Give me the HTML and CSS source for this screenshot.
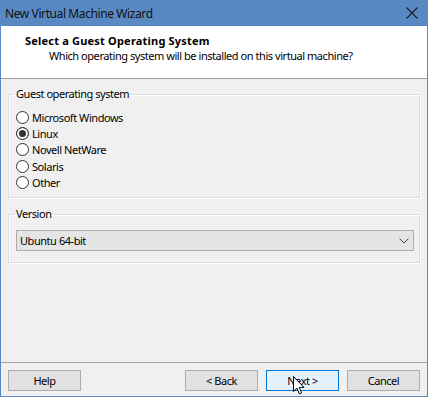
FILE: index.html
```html
<!DOCTYPE html>
<html lang="en">
<head>
    <meta charset="UTF-8">
    <meta name="viewport" content="width=device-width, initial-scale=1.0">
    <title>New Virtual Machine Wizard</title>
    <link rel="stylesheet" href="styles.css">
</head>
<body>
    <div class="window">
        <div class="titlebar">
            <span class="title">New Virtual Machine Wizard</span>
            <svg class="close" width="12" height="12" viewBox="0 0 12 12">
                <path d="M0.5 0.5 L11.5 11.5 M11.5 0.5 L0.5 11.5" stroke="#1a1a1a" stroke-width="1.1" fill="none"/>
            </svg>
        </div>

        <div class="header">
            <h1>Select a Guest Operating System</h1>
            <p>Which operating system will be installed on this virtual machine?</p>
        </div>

        <div class="content">
            <fieldset class="group">
                <legend>Guest operating system</legend>
                <label class="option"><input type="radio" name="os"> Microsoft Windows</label>
                <label class="option"><input type="radio" name="os" checked> Linux</label>
                <label class="option"><input type="radio" name="os"> Novell NetWare</label>
                <label class="option"><input type="radio" name="os"> Solaris</label>
                <label class="option"><input type="radio" name="os"> Other</label>
            </fieldset>

            <fieldset class="group group-version">
                <legend>Version</legend>
                <div class="combo">
                    <span>Ubuntu 64-bit</span>
                    <svg width="10" height="6" viewBox="0 0 10 6">
                        <path d="M0.5 0.5 L5 5 L9.5 0.5" stroke="#444" stroke-width="1" fill="none"/>
                    </svg>
                </div>
            </fieldset>
        </div>

        <div class="footer">
            <button type="button">Help</button>
            <span class="spacer"></span>
            <button type="button">&lt; Back</button>
            <button type="button" class="btn-default">Next &gt;</button>
            <button type="button">Cancel</button>

            <svg class="cursor" width="12" height="19" viewBox="0 0 12 19">
                <path d="M0.5 0.5 L0.5 15.5 L4 12.2 L6.4 17.8 L8.6 16.9 L6.3 11.4 L11 11.4 Z" fill="#fff" stroke="#000" stroke-width="1"/>
            </svg>
        </div>
    </div>
</body>
</html>
```

FILE: styles.css
```css
body {
    margin: 0;
    font-family: "Noto Sans", sans-serif;
    font-size: 11px;
    letter-spacing: -0.45px;
    color: #000000;
}
.window {
    width: 428px;
    height: 397px;
    box-sizing: border-box;
    border: 1px solid #5889c3;
    border-top: none;
    background-color: #f0f0f0;
    display: flex;
    flex-direction: column;
}
.titlebar {
    height: 26px;
    margin: 0 -1px;
    padding: 0 10px 0 5px;
    background-color: #5889c3;
    display: flex;
    align-items: center;
    justify-content: space-between;
    font-size: 12px;
    letter-spacing: -0.4px;
    color: #111111;
}
.header {
    background-color: #ffffff;
    border-bottom: 1px solid #a0a0a0;
    padding: 0 0 0 24px;
    box-sizing: border-box;
    height: 53px;
}
.header h1 {
    margin: 7px 0 0 0;
    font-size: 11px;
    font-weight: bold;
    letter-spacing: 0.2px;
    line-height: 16px;
}
.header p {
    margin: -1px 0 0 24px;
    line-height: 15px;
}
.content {
    flex: 1;
    padding: 7px 7px 0 7px;
}
.group {
    margin: 0;
    padding: 7px 5px 7px 6px;
    border: 1px solid #dcdcdc;
    box-shadow: 1px 1px 0 #ffffff, inset 1px 1px 0 #ffffff;
}
.group legend {
    padding: 0 1px;
    line-height: 16px;
}
.option {
    display: flex;
    align-items: center;
    height: 16.3px;
    gap: 3px;
}
.option input {
    appearance: none;
    margin: 0 0 0 1px;
    width: 13px;
    height: 13px;
    border: 1px solid #333333;
    border-radius: 50%;
    background-color: #ffffff;
}
.option input:checked {
    background-color: #333333;
    box-shadow: inset 0 0 0 2px #ffffff;
}
.group-version {
    margin-top: 8px;
    padding: 8px 5px 11px 6px;
}
.combo {
    margin-left: 1px;
    height: 21px;
    box-sizing: border-box;
    border: 1px solid #acacac;
    background-color: #e5e5e5;
    display: flex;
    align-items: center;
    justify-content: space-between;
    padding: 0 4px 0 3px;
}
.footer {
    position: relative;
    border-top: 1px solid #a0a0a0;
    padding: 7px 7px 5px 7px;
    display: flex;
    gap: 8px;
}
.footer .spacer {
    flex: 1;
}
.footer button {
    width: 73px;
    height: 21px;
    padding: 0;
    border: 1px solid #adadad;
    background-color: #e1e1e1;
    font-family: "Noto Sans", sans-serif;
    font-size: 11px;
    letter-spacing: -0.45px;
    color: #000000;
}
.footer .btn-default {
    border-color: #0078d7;
    background-color: #e5f1fb;
}
.cursor {
    position: absolute;
    left: 292px;
    top: 13px;
}
```
